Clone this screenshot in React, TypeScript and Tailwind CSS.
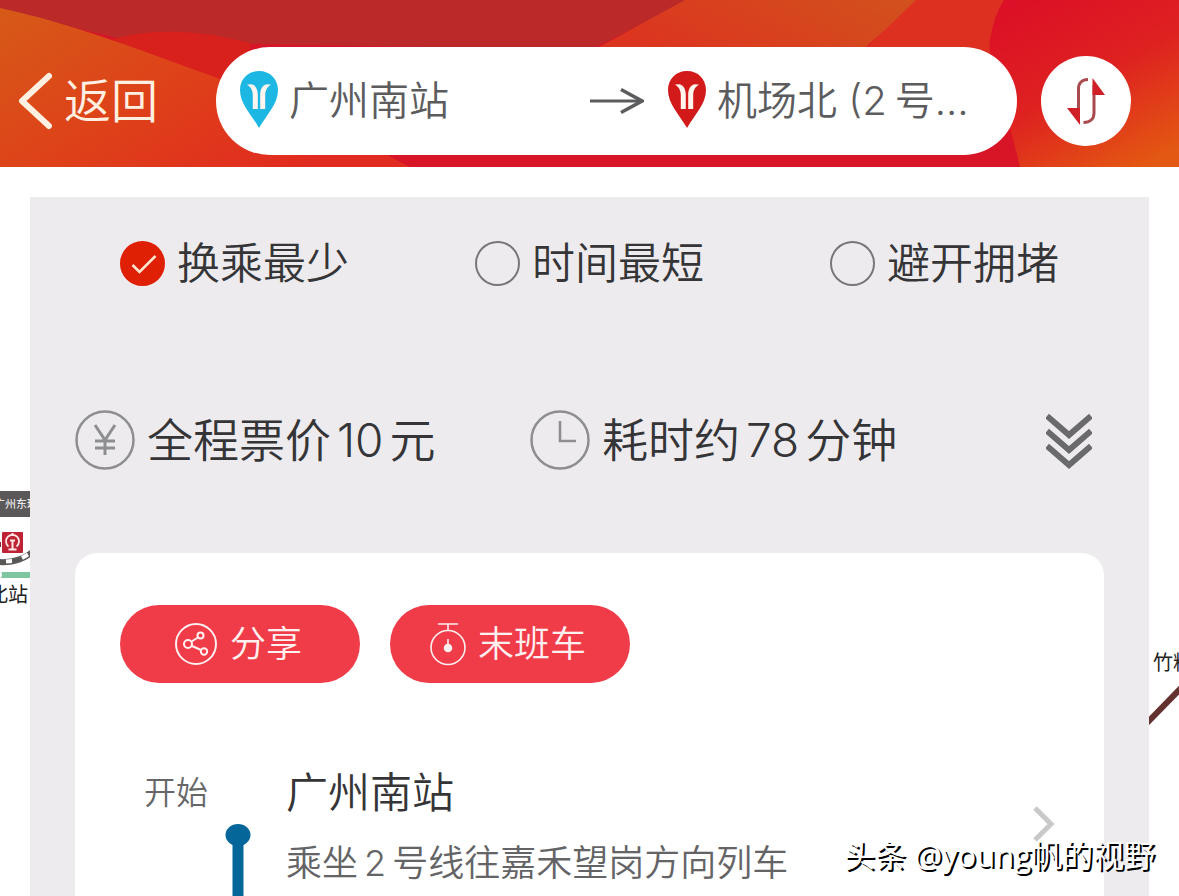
import { useState, type ReactNode } from "react";

function MetroPin({ className }: { className: string }) {
  return (
    <svg viewBox="0 0 38 60" className={`h-[60px] w-[38px] shrink-0 ${className}`} aria-hidden="true">
      <path d="M19 0C8 0 0 8 0 19c0 14 11 24 19 38 8-14 19-24 19-38C38 8 30 0 19 0z" fill="currentColor" />
      <path
        d="M7 13.500C10.500 16 12.800 19 12.800 24V38H17.800V24C17.800 18.500 15.500 14 11.500 13.300zM31 13.500C27.500 16 25.200 19 25.200 24V38H20.200V24C20.200 18.500 22.500 14 26.500 13.300z"
        fill="#fff4ee"
      />
    </svg>
  );
}

function Num({ children }: { children: ReactNode }) {
  return <span className="mx-1.5">{children}</span>;
}

function HeaderArt() {
  return (
    <svg className="absolute inset-0 h-full w-full" viewBox="0 0 1179 167" preserveAspectRatio="none" aria-hidden="true">
      <defs>
        <linearGradient id="left" x1="0" y1="0" x2="1" y2="0.6">
          <stop offset="0" stopColor="#d65a18" />
          <stop offset="0.5" stopColor="#de4219" />
          <stop offset="1" stopColor="#e12a20" />
        </linearGradient>
        <linearGradient id="mid" x1="1" y1="0" x2="0" y2="0.3">
          <stop offset="0" stopColor="#d2521d" />
          <stop offset="1" stopColor="#dc351f" />
        </linearGradient>
        <linearGradient id="right" x1="0.2" y1="0" x2="0.8" y2="1">
          <stop offset="0" stopColor="#dc1026" />
          <stop offset="0.5" stopColor="#de2220" />
          <stop offset="1" stopColor="#e35812" />
        </linearGradient>
      </defs>
      <rect width="1179" height="167" fill="#d71527" />
      <path d="M0 0H690L590 50L250 44L125 40L0 10z" fill="#bc2929" />
      <path d="M110 40Q170 22 250 43V100H200z" fill="#d8201c" />
      <path d="M0 8C70 23 140 50 215 77L320 120L410 167H0z" fill="url(#left)" />
      <path d="M685 0H920L860 52H590z" fill="url(#mid)" />
      <path d="M916 0H1010L992 90L864 50z" fill="#de3020" />
      <path d="M1004 0H1179V167H1020C1010 120 986 60 990 40Q994 15 1004 0z" fill="url(#right)" />
    </svg>
  );
}

function MapBackdrop() {
  return (
    <div className="absolute inset-0 overflow-hidden bg-white font-normal text-[#222]" aria-hidden="true">
      <div className="absolute left-0 top-[324px] h-[26px] w-10 overflow-hidden bg-[#5a5859]">
        <span className="absolute -left-1.5 top-1.5 whitespace-nowrap text-[11px] leading-[14px] text-white">广州东环</span>
      </div>
      <svg className="absolute left-0 top-[360px] h-[60px] w-10" viewBox="0 0 40 60">
        <path d="M-2 35C14 36 26 32 38 20" fill="none" stroke="#5b5957" strokeWidth="6" />
        <path d="M6 34.500L12 34M22 31L28 27.500" stroke="white" strokeWidth="4" />
        <path d="M0 48H40" stroke="#7dc6a0" strokeWidth="6" />
        <circle cx="-2" cy="48" r="4" fill="#fff" />
        <rect x="2" y="5" width="21" height="21" rx="1" fill="#bd2334" />
        <path d="M8.500 19.500A6.500 6.500 0 1 1 16.500 19.500" fill="none" stroke="#ffe7e5" strokeWidth="1.800" />
        <path d="M10 13.500h5M12.500 13.500v8M8.500 22.500h8M12.500 6v3" stroke="#ffe7e5" strokeWidth="2" />
        <path d="M0 15v5" stroke="#8c2330" strokeWidth="2" />
      </svg>
      <span className="absolute -left-3 top-[416px] whitespace-nowrap text-[20px] leading-6">北站</span>
      <span className="absolute left-[calc(100%-26px)] top-[484px] whitespace-nowrap text-[20px] leading-6">竹料</span>
      <svg className="absolute right-0 top-[510px] h-12 w-[34px]" viewBox="0 0 34 48">
        <path d="M-2 50L38 9" stroke="#63322f" strokeWidth="6" />
      </svg>
    </div>
  );
}

function RouteOption({ label, checked, onSelect }: { label: string; checked: boolean; onSelect: () => void }) {
  return (
    <label className="flex cursor-pointer items-center gap-3">
      <span className="relative flex size-[45px]">
        <input
          type="radio"
          name="route"
          checked={checked}
          onChange={onSelect}
          className="size-[45px] appearance-none rounded-full border-2 border-[#77777a] checked:border-[#df2005] checked:bg-[#df2005]"
        />
        {checked && (
          <svg viewBox="0 0 45 45" className="pointer-events-none absolute inset-0" aria-hidden="true">
            <path d="M12.500 24l7 7L35.500 15" fill="none" stroke="#ffe6cf" strokeWidth="2.600" />
          </svg>
        )}
      </span>
      <span>{label}</span>
    </label>
  );
}

export default function App() {
  const options = ["换乘最少", "时间最短", "避开拥堵"];
  const [route, setRoute] = useState(options[0]);
  const [swapped, setSwapped] = useState(false);
  const south = <>广州南站</>;
  const airport = (
    <>
      机场北 (2<span className="ml-2">号航站楼)</span>
    </>
  );

  return (
    <div className="relative flex h-screen flex-col overflow-hidden bg-white font-['Inter','Noto_Sans_CJK_SC',sans-serif] font-[350] text-[#353537]">
      <header className="relative shrink-0">
        <HeaderArt />
        <div className="relative flex items-center gap-6 pb-3 pl-[18px] pr-12 pt-[47px]">
          <button type="button" className="flex w-[174px] items-center gap-3 text-[47px] leading-[60px] text-[#fff0e2]">
            <svg viewBox="0 0 34 58" className="h-[58px] w-[34px]" fill="none" stroke="currentColor" strokeWidth="6" strokeLinecap="round" strokeLinejoin="round" aria-hidden="true">
              <path d="M31 4L4 29l27 25" />
            </svg>
            返回
          </button>
          <div className="flex h-[108px] min-w-0 flex-1 items-center rounded-full bg-white pl-6 pr-10 text-[40px] leading-[56px] text-[#5c5c5e]">
            <div className="flex min-w-0 flex-1 items-center gap-[11px]">
              <MetroPin className="text-[#1cb7e3]" />
              <span className="truncate">{swapped ? airport : south}</span>
            </div>
            <svg viewBox="0 0 54 28" className="mr-6 h-7 w-[54px] shrink-0" fill="none" stroke="currentColor" strokeWidth="3" aria-hidden="true">
              <path d="M0 14h52" />
              <path d="M31 2.500L52 14L31 25.500" strokeWidth="3.500" />
            </svg>
            <div className="flex w-[309px] items-center gap-[11px]">
              <MetroPin className="text-[#d11a19]" />
              <span className="truncate">{swapped ? south : airport}</span>
            </div>
          </div>
          <button
            type="button"
            aria-label="交换起点和终点"
            onClick={() => setSwapped(!swapped)}
            className="flex size-[90px] shrink-0 items-center justify-center rounded-full bg-white"
          >
            <svg viewBox="0 0 40 48" className="h-12 w-10" aria-hidden="true">
              <path d="M22 2.500C16 2.500 12.500 6 12.500 12V40M17.500 45.500C24 45.500 28 42 28 36V8" fill="none" stroke="#a94a4e" strokeWidth="3" />
              <path d="M1 31h13v17zM39 18H26.500V1z" fill="#cf2027" />
            </svg>
          </button>
        </div>
      </header>

      <main className="relative flex min-h-0 flex-1 flex-col px-[30px] pt-[30px]">
        <MapBackdrop />
        <section className="relative flex flex-1 flex-col bg-[#edebee] pt-9">
          <div role="radiogroup" aria-label="路线偏好" className="flex justify-between px-[90px] text-[43px] leading-[60px]">
            {options.map((o) => (
              <RouteOption key={o} label={o} checked={route === o} onSelect={() => setRoute(o)} />
            ))}
          </div>

          <div className="mx-[45px] mt-28 grid grid-cols-[455px_1fr_auto] items-center pr-3 text-[46px] leading-[70px]">
            <div className="flex items-center gap-3">
              <svg viewBox="0 0 60 60" className="size-[60px]" fill="none" stroke="#8e8e90" aria-hidden="true">
                <circle cx="30" cy="30" r="28.500" strokeWidth="2.500" />
                <path d="M20 15l10 15 10-15M30 30v15M20 31h20M20 38h20" strokeWidth="3" />
              </svg>
              <span>全程票价<Num>10</Num>元</span>
            </div>
            <div className="flex items-center gap-3">
              <svg viewBox="0 0 60 60" className="size-[60px]" fill="none" stroke="#8e8e90" aria-hidden="true">
                <circle cx="30" cy="30" r="28.500" strokeWidth="2.500" />
                <path d="M30 11v20h16" strokeWidth="2.600" />
              </svg>
              <span>耗时约<Num>78</Num>分钟</span>
            </div>
            <button type="button" aria-label="展开">
              <svg viewBox="0 0 46 58" className="h-[58px] w-[46px]" fill="none" stroke="#6a6a6c" strokeWidth="6" aria-hidden="true">
                <path d="M1 5l22 19L45 5M1 20l22 19 22-19M1 35l22 19 22-19" />
              </svg>
            </button>
          </div>

          <article className="mx-[45px] mt-[78px] flex-1 rounded-t-[22px] bg-white px-[45px] pt-[52px]">
            <div className="flex gap-[30px] text-[36px] leading-[78px] text-[#fff0f0]">
              <button type="button" className="flex h-[78px] w-60 items-center justify-center gap-3 rounded-full bg-[#f03c49] pr-1">
                <svg viewBox="0 0 44 44" className="size-[44px]" fill="none" stroke="currentColor" strokeWidth="2" aria-hidden="true">
                  <circle cx="22" cy="22" r="20" />
                  <circle cx="14" cy="22" r="4" />
                  <circle cx="26.500" cy="13.500" r="3" />
                  <circle cx="30" cy="29.500" r="3.200" />
                  <path d="M17.500 19.500l6.500-4M18 24l9 4" />
                </svg>
                分享
              </button>
              <button type="button" className="flex h-[78px] w-60 items-center justify-center gap-3 rounded-full bg-[#f03c49] pr-1">
                <svg viewBox="0 0 36 44" className="h-11 w-9" fill="none" stroke="currentColor" strokeWidth="1.600" aria-hidden="true">
                  <circle cx="18" cy="25.500" r="17" />
                  <path d="M8 2h20M18 2v6M18 17v9" />
                  <circle cx="18" cy="26" r="3.500" fill="currentColor" />
                </svg>
                末班车
              </button>
            </div>

            <a href="#start" className="mt-20 grid grid-cols-[166px_1fr_auto]">
              <div className="flex flex-col items-center">
                <span className="mr-[54px] text-[32px] leading-[60px] text-[#67676a]">开始</span>
                <svg viewBox="0 0 26 90" className="ml-[70px] h-[90px] w-[26px]" aria-hidden="true">
                  <ellipse cx="13" cy="12" rx="12.500" ry="11" fill="#05669a" />
                  <path d="M13 12v80" stroke="#05669a" strokeWidth="11" />
                </svg>
              </div>
              <div>
                <h2 className="text-[42px] leading-[60px]">广州南站</h2>
                <p className="mt-2.5 text-[36px] leading-[60px] text-[#646466]">乘坐<Num>2</Num>号线往嘉禾望岗方向列车</p>
              </div>
              <svg viewBox="0 0 22 36" className="mr-1 mt-[43px] h-9 w-[22px]" fill="none" stroke="#c9c9cb" strokeWidth="5" aria-hidden="true">
                <path d="M2 2l16 16L2 34" />
              </svg>
            </a>
          </article>
        </section>
      </main>

      <div className="absolute bottom-[21px] right-6 font-['Open_Sans','Noto_Sans_CJK_SC',sans-serif] text-[31px] font-normal leading-[40px] text-white [text-shadow:2px_2px_0_#000]">
        头条 @young帆的视野
      </div>
    </div>
  );
}
